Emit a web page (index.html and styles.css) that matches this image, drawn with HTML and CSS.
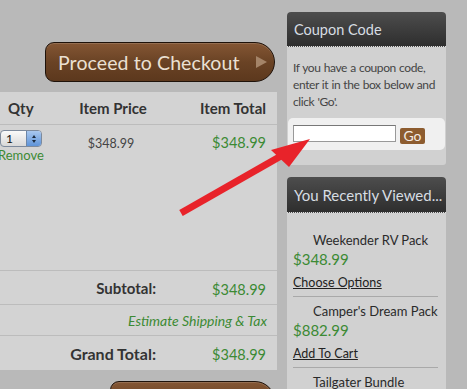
FILE: index.html
```html
<!DOCTYPE html>
<html>
<head>
<meta charset="utf-8">
<link rel="stylesheet" href="styles.css">
</head>
<body>
<div class="page">
  <div class="main">
    <div class="btn-row">
      <a class="checkout">Proceed to Checkout<span class="tri"></span></a>
    </div>
    <div class="cart">
      <div class="row head">
        <div class="c-qty">Qty</div>
        <div class="c-price">Item Price</div>
        <div class="c-total">Item Total</div>
      </div>
      <div class="row item">
        <div class="c-qty">
          <div class="spin"><span class="val">1</span><span class="arrows"><i class="up"></i><i class="dn"></i></span></div>
          <a class="remove">Remove</a>
        </div>
        <div class="c-price price-plain">$348.99</div>
        <div class="c-total green">$348.99</div>
      </div>
      <div class="row sum">
        <div class="lbl">Subtotal:</div>
        <div class="c-total green">$348.99</div>
      </div>
      <div class="row ship">
        <a class="est">Estimate Shipping &amp; Tax</a>
      </div>
      <div class="row sum grand">
        <div class="lbl">Grand Total:</div>
        <div class="c-total green">$348.99</div>
      </div>
    </div>
    <div class="btn-row">
      <a class="checkout bottom"></a>
    </div>
  </div>
  <div class="side">
    <div class="panel coupon">
      <div class="ph">Coupon Code</div>
      <div class="pb">
        <p class="intro">If you have a coupon code, enter it in the box below and click 'Go'.</p>
        <div class="cbox"><span class="cinput"></span><span class="go">Go</span></div>
      </div>
    </div>
    <div class="panel recent">
      <div class="ph">You Recently Viewed...</div>
      <div class="pb list">
        <div class="prod">
          <div class="pname">Weekender RV Pack</div>
          <div class="pprice">$348.99</div>
          <a class="plink">Choose Options</a>
        </div>
        <div class="prod">
          <div class="pname">Camper's Dream Pack</div>
          <div class="pprice">$882.99</div>
          <a class="plink">Add To Cart</a>
        </div>
        <div class="prod">
          <div class="pname">Tailgater Bundle</div>
        </div>
      </div>
    </div>
  </div>
</div>
<svg class="arrow" width="467" height="389" viewBox="0 0 467 389">
  <line x1="181" y1="213" x2="288" y2="152" stroke="#e8232a" stroke-width="7"/>
  <polygon points="310,139 271,150 289,167" fill="#e8232a"/>
</svg>
</body>
</html>
```

FILE: styles.css
```css
* { box-sizing: border-box; }
html, body { margin: 0; padding: 0; }
body {
  background: #b9b9b9;
  width: 467px;
  height: 389px;
  overflow: hidden;
  position: relative;
  font-family: Lato, "Open Sans", sans-serif;
  color: #333;
}
.page { display: flex; align-items: flex-start; }
.main { width: 277px; flex: none; padding-top: 42px; }
.btn-row { display: flex; justify-content: flex-end; padding-right: 2px; }
.checkout {
  display: flex;
  align-items: center;
  width: 230px;
  height: 40px;
  padding-left: 12px;
  border: 1px solid #1e120a;
  border-radius: 9px 20px 20px 9px;
  background: linear-gradient(#845634, #6a4325 50%, #5c381d);
  color: #ebe0d3;
  font-size: 19.5px;
  letter-spacing: 0.1px;
  position: relative;
  box-shadow: inset 0 1px 0 rgba(255,255,255,0.15);
}
.tri {
  position: absolute;
  right: 7px;
  top: 13px;
  width: 0; height: 0;
  border-top: 6px solid transparent;
  border-bottom: 6px solid transparent;
  border-left: 11px solid #a48468;
}
.checkout.bottom { width: 165px; margin-top: 11px; }
.cart { background: #d3d3d3; margin-top: 10px; }
.row { display: grid; grid-template-columns: 42px 142px 1fr; border-bottom: 1px solid #bcbcbc; }
.row > .c-qty { text-align: center; }
.row > .c-price { text-align: center; }
.row > .c-total { text-align: right; padding-right: 11px; }
.head { height: 33px; align-items: center; font-weight: bold; font-size: 15px; color: #333; }
.head .c-qty { text-align: left; padding-left: 8px; }
.item { height: 146px; align-items: start; padding-top: 5px; }
.spin {
  width: 42px; height: 17px;
  display: flex;
  border: 1px solid #7d8a9c;
  border-radius: 4px;
  background: linear-gradient(#fafafa, #d8d8d8);
  overflow: hidden;
}
.spin .val { flex: 1; font-size: 12px; line-height: 15px; text-align: left; padding-left: 5px; color: #111; }
.spin .arrows {
  width: 15px;
  background: linear-gradient(#a9c8ef, #5e93d8);
  border-left: 1px solid #6c86a8;
  display: flex; flex-direction: column; align-items: center; justify-content: center; gap: 2px;
}
.spin i { width: 0; height: 0; border-left: 2.5px solid transparent; border-right: 2.5px solid transparent; }
.spin .up { border-bottom: 3px solid #1b2a3d; }
.spin .dn { border-top: 3px solid #1b2a3d; }
.remove { display: block; color: #3c8a34; font-size: 13px; margin-top: 0; margin-left: -2px; text-align: left; }
.price-plain { font-size: 12.5px; color: #444; padding-top: 6px; padding-right: 4px; }
.green { color: #3c8a34; }
.item .c-total { font-size: 14.5px; padding-top: 4px; }
.sum { grid-template-columns: 184px 1fr; align-items: center; height: 34px; }
.sum .lbl { text-align: right; padding-right: 28px; font-weight: bold; font-size: 15px; color: #333; }
.grand .lbl { font-size: 16px; }
.sum .c-total { font-size: 14.5px; padding-top: 3px; }
.grand { height: 34px; border-bottom: none; }
.ship { display: flex; justify-content: flex-end; align-items: center; height: 31px; padding-right: 10px; }
.est { color: #3c8a34; font-style: italic; font-size: 14px; }

.side { width: 159px; margin-left: 10px; padding-top: 12px; flex: none; }
.panel { background: #d1d1d1; border-radius: 4px 4px 3px 3px; margin-bottom: 12px; }
.ph {
  height: 35px;
  background: linear-gradient(#4d4d4d, #2e2e2e);
  border-radius: 4px 4px 0 0;
  border-bottom: 1px dotted #e0e0e0;
  color: #d7dde3;
  font-size: 15px;
  display: flex; align-items: center;
  padding-left: 7px;
  white-space: nowrap;
}
.coupon .ph { height: 35px; font-size: 14.5px; }
.coupon .pb { padding: 12px 1px 15px 1px; }
.intro { margin: 0 0 8px; padding: 0 0 0 5px; font-size: 12px; line-height: 17px; color: #454545; letter-spacing: -0.4px; word-spacing: 0.5px; }
.cbox { background: #f0f0f0; border-radius: 5px; height: 32px; display: flex; align-items: center; padding-left: 5px; }
.cinput { width: 103px; height: 17px; background: #fff; border: 1px solid #999; border-top-color: #777; margin-top: -1px; }
.go {
  margin-left: 4px; width: 25px; height: 16px; margin-top: 4px;
  background: #8d5c2f; color: #f4ece4; border-radius: 2px;
  font-size: 14px; line-height: 16px; text-align: center;
}
.recent .ph { height: 36px; }
.list { padding: 18px 8px 0 6px; }
.prod { border-bottom: 1px solid #a9a9a9; padding-bottom: 4px; margin-bottom: 5px; }
.pname { padding-left: 20px; font-size: 13px; line-height: 18px; color: #2a2a2a; }
.pprice { font-size: 15px; line-height: 21px; color: #3c8a34; }
.plink { display: block; font-size: 12.5px; line-height: 18px; color: #222; text-decoration: underline; margin-top: 4px; }
.arrow { position: absolute; left: 0; top: 0; pointer-events: none; }
```
